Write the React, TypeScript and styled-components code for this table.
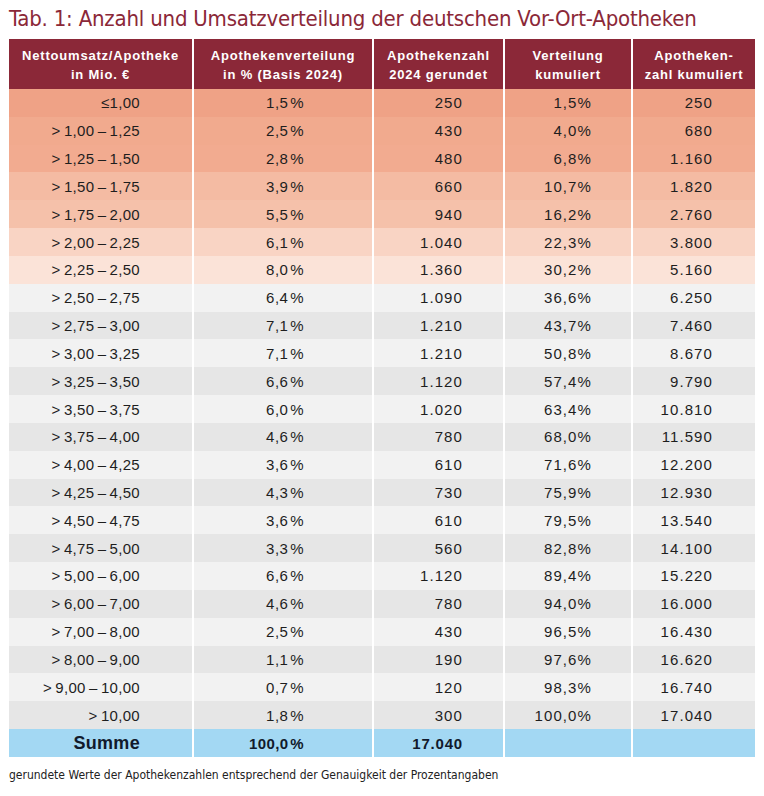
import React from 'react';
import styled, { createGlobalStyle } from 'styled-components';

const GlobalStyle = createGlobalStyle`
  body {
    margin: 0;
    background: #ffffff;
    font-family: "Liberation Sans", sans-serif;
  }
`;

const T = '\u2009';
const H = '\u200a';

const rows: string[][] = [
  ['≤1,00', `1,5${H}%`, '250', '1,5%', '250'],
  [`>${T}1,00${T}–${T}1,25`, `2,5${H}%`, '430', '4,0%', '680'],
  [`>${T}1,25${T}–${T}1,50`, `2,8${H}%`, '480', '6,8%', '1.160'],
  [`>${T}1,50${T}–${T}1,75`, `3,9${H}%`, '660', '10,7%', '1.820'],
  [`>${T}1,75${T}–${T}2,00`, `5,5${H}%`, '940', '16,2%', '2.760'],
  [`>${T}2,00${T}–${T}2,25`, `6,1${H}%`, '1.040', '22,3%', '3.800'],
  [`>${T}2,25${T}–${T}2,50`, `8,0${H}%`, '1.360', '30,2%', '5.160'],
  [`>${T}2,50${T}–${T}2,75`, `6,4${H}%`, '1.090', '36,6%', '6.250'],
  [`>${T}2,75${T}–${T}3,00`, `7,1${H}%`, '1.210', '43,7%', '7.460'],
  [`>${T}3,00${T}–${T}3,25`, `7,1${H}%`, '1.210', '50,8%', '8.670'],
  [`>${T}3,25${T}–${T}3,50`, `6,6${H}%`, '1.120', '57,4%', '9.790'],
  [`>${T}3,50${T}–${T}3,75`, `6,0${H}%`, '1.020', '63,4%', '10.810'],
  [`>${T}3,75${T}–${T}4,00`, `4,6${H}%`, '780', '68,0%', '11.590'],
  [`>${T}4,00${T}–${T}4,25`, `3,6${H}%`, '610', '71,6%', '12.200'],
  [`>${T}4,25${T}–${T}4,50`, `4,3${H}%`, '730', '75,9%', '12.930'],
  [`>${T}4,50${T}–${T}4,75`, `3,6${H}%`, '610', '79,5%', '13.540'],
  [`>${T}4,75${T}–${T}5,00`, `3,3${H}%`, '560', '82,8%', '14.100'],
  [`>${T}5,00${T}–${T}6,00`, `6,6${H}%`, '1.120', '89,4%', '15.220'],
  [`>${T}6,00${T}–${T}7,00`, `4,6${H}%`, '780', '94,0%', '16.000'],
  [`>${T}7,00${T}–${T}8,00`, `2,5${H}%`, '430', '96,5%', '16.430'],
  [`>${T}8,00${T}–${T}9,00`, `1,1${H}%`, '190', '97,6%', '16.620'],
  [`>${T}9,00${T}–${T}10,00`, `0,7${H}%`, '120', '98,3%', '16.740'],
  [`>${T}10,00`, `1,8${H}%`, '300', '100,0%', '17.040'],
];

const peach = ['#efa286', '#f1aa8e', '#f2ab90', '#f4bba3', '#f5c1aa', '#f9d4c4', '#fbe3d8'];

const rowColor = (i: number) => {
  if (i < peach.length) return peach[i];
  return i % 2 === 1 ? '#f2f2f2' : '#e6e6e6';
};

const headers = [
  ['Nettoumsatz/Apotheke', 'in Mio. €'],
  ['Apothekenverteilung', 'in % (Basis 2024)'],
  ['Apothekenzahl', '2024 gerundet'],
  ['Verteilung', 'kumuliert'],
  ['Apotheken-', 'zahl kumuliert'],
];

const padRight = [52, 68, 40, 39, 42];
const tracking = [0.3, 0.5, 1.1, 1.1, 1.1];

const Page = styled.div`
  width: 746px;
  padding: 0 9px;
`;

const Title = styled.h1`
  margin: 0;
  height: 39px;
  line-height: 38px;
  font-family: "DejaVu Sans Condensed", "DejaVu Sans", sans-serif;
  font-weight: 400;
  font-size: 22px;
  letter-spacing: -0.2px;
  color: #8b2838;
  white-space: nowrap;
`;

const Table = styled.div`
  display: flex;
  flex-direction: column;
`;

const Row = styled.div<{ $h: number }>`
  display: grid;
  grid-template-columns: 183px 178px 129px 126px 122px;
  column-gap: 2px;
  height: ${p => p.$h}px;
`;

const HeadCell = styled.div`
  display: flex;
  align-items: center;
  justify-content: center;
  background: #8b2838;
  color: #ffffff;
  font-weight: 700;
  font-size: 13px;
  letter-spacing: 0.8px;
  line-height: 19px;
  text-align: center;
  padding-top: 1px;
`;

const Cell = styled.div<{ $bg: string; $pr: number; $ls: number }>`
  display: flex;
  align-items: center;
  justify-content: flex-end;
  padding-right: ${p => p.$pr}px;
  background: ${p => p.$bg};
  font-size: 15px;
  letter-spacing: ${p => p.$ls}px;
  color: #1e1e1e;
  white-space: nowrap;
`;

const SumCell = styled(Cell)<{ $big?: boolean }>`
  font-weight: 700;
  font-size: ${p => (p.$big ? '18px' : '15px')};
  color: #111a2c;
`;

const Note = styled.p`
  margin: 11px 0 0;
  font-family: "DejaVu Sans Condensed", "DejaVu Sans", sans-serif;
  font-size: 12px;
  color: #222222;
`;

const sumBg = '#a3d8f3';

export default function App() {
  return (
    <Page>
      <GlobalStyle />
      <Title>Tab. 1: Anzahl und Umsatzverteilung der deutschen Vor-Ort-Apotheken</Title>
      <Table>
        <Row $h={50}>
          {headers.map((h, i) => (
            <HeadCell key={i}>
              {h[0]}
              <br />
              {h[1]}
            </HeadCell>
          ))}
        </Row>
        {rows.map((r, i) => (
          <Row key={i} $h={27.83}>
            {r.map((v, j) => (
              <Cell key={j} $bg={rowColor(i)} $pr={padRight[j]} $ls={tracking[j]}>{v}</Cell>
            ))}
          </Row>
        ))}
        <Row $h={28}>
          <SumCell $bg={sumBg} $pr={padRight[0]} $ls={0.3} $big>Summe</SumCell>
          <SumCell $bg={sumBg} $pr={padRight[1]} $ls={0.4}>100,0{H}%</SumCell>
          <SumCell $bg={sumBg} $pr={padRight[2]} $ls={0.8}>17.040</SumCell>
          <SumCell $bg={sumBg} $pr={padRight[3]} $ls={0} />
          <SumCell $bg={sumBg} $pr={padRight[4]} $ls={0} />
        </Row>
      </Table>
      <Note>gerundete Werte der Apothekenzahlen entsprechend der Genauigkeit der Prozentangaben</Note>
    </Page>
  );
}
